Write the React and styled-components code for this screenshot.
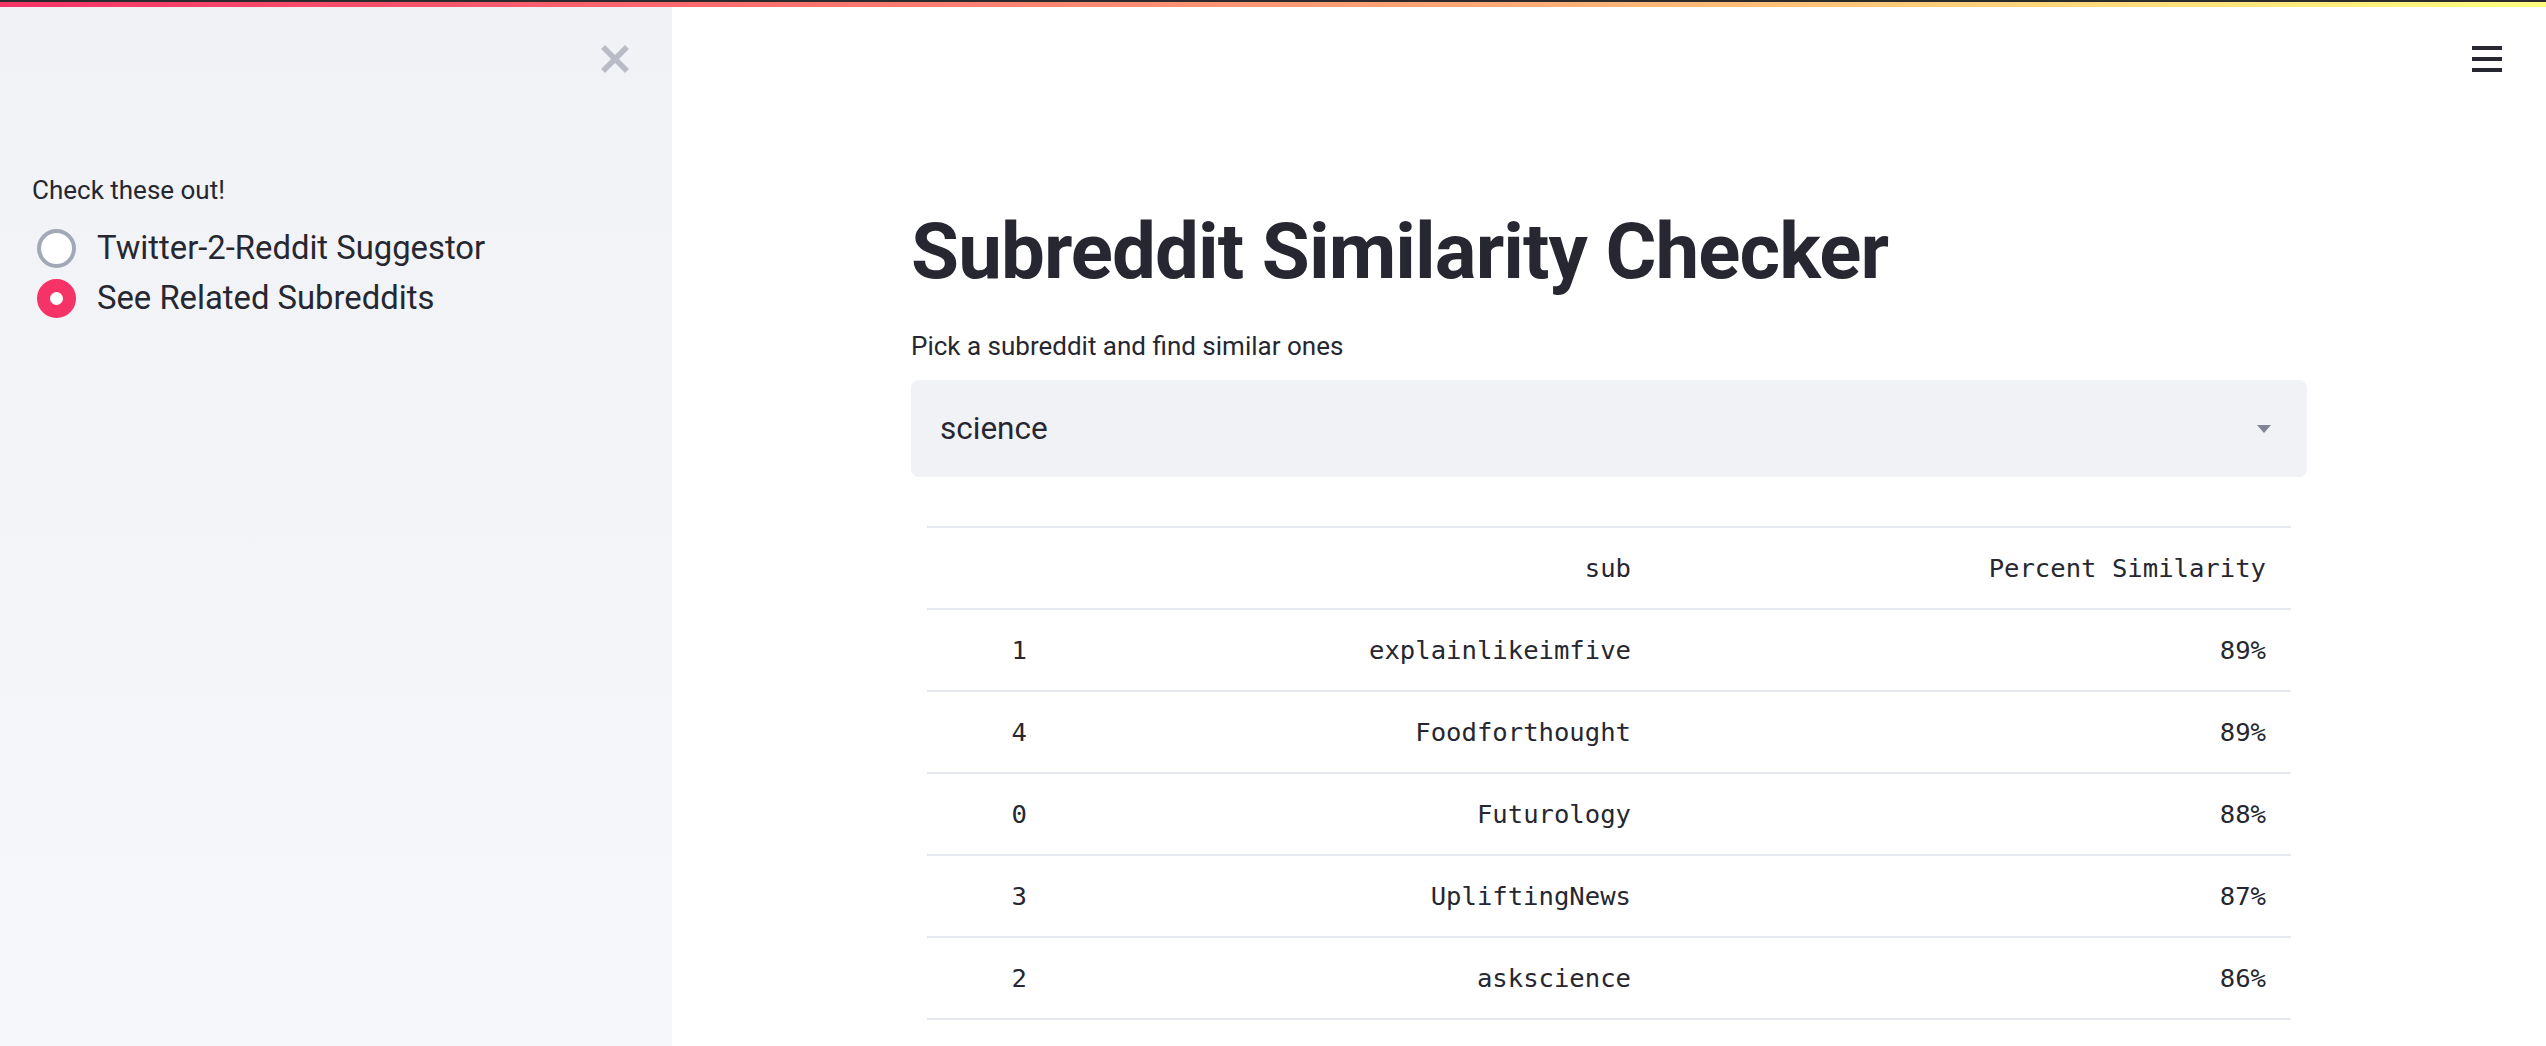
import styled, { createGlobalStyle } from "styled-components";

const GlobalStyle = createGlobalStyle`
  * { box-sizing: border-box; }
  html, body { margin: 0; padding: 0; background: #ffffff; }
  body {
    font-family: Roboto, "Noto Sans", sans-serif;
    color: #262730;
    -webkit-font-smoothing: antialiased;
  }
`;

const rows = [
  { idx: 1, sub: "explainlikeimfive", pct: "89%" },
  { idx: 4, sub: "Foodforthought", pct: "89%" },
  { idx: 0, sub: "Futurology", pct: "88%" },
  { idx: 3, sub: "UpliftingNews", pct: "87%" },
  { idx: 2, sub: "askscience", pct: "86%" },
];

const options = [
  { label: "Twitter-2-Reddit Suggestor", checked: false },
  { label: "See Related Subreddits", checked: true },
];

const App = () => (
  <>
    <GlobalStyle />
    <Page>
      <Decoration />
      <Body>
        <Sidebar>
          <SidebarTop>
            <CloseButton aria-label="Close sidebar">
              <svg width="28" height="28" viewBox="0 0 28 28">
                <path
                  d="M4 4 L24 24 M24 4 L4 24"
                  stroke="currentColor"
                  strokeWidth="5.5"
                  strokeLinecap="square"
                />
              </svg>
            </CloseButton>
          </SidebarTop>
          <WidgetLabel>Check these out!</WidgetLabel>
          <RadioGroup>
            {options.map((o) => (
              <RadioOption key={o.label}>
                <RadioMark $checked={o.checked} />
                <RadioText>{o.label}</RadioText>
              </RadioOption>
            ))}
          </RadioGroup>
        </Sidebar>
        <Main>
          <Toolbar>
            <MenuButton aria-label="Menu">
              <svg width="30" height="26" viewBox="0 0 30 26">
                <rect x="0" y="0" width="30" height="4" fill="currentColor" />
                <rect x="0" y="11" width="30" height="4" fill="currentColor" />
                <rect x="0" y="22" width="30" height="4" fill="currentColor" />
              </svg>
            </MenuButton>
          </Toolbar>
          <Block>
            <Title>Subreddit Similarity Checker</Title>
            <FieldLabel>Pick a subreddit and find similar ones</FieldLabel>
            <Select>
              <SelectValue>science</SelectValue>
              <Caret />
            </Select>
            <Table>
              <HeadRow>
                <Cell />
                <Cell>sub</Cell>
                <Cell>Percent Similarity</Cell>
              </HeadRow>
              {rows.map((r) => (
                <DataRow key={r.idx}>
                  <Cell>{r.idx}</Cell>
                  <Cell>{r.sub}</Cell>
                  <Cell>{r.pct}</Cell>
                </DataRow>
              ))}
            </Table>
          </Block>
        </Main>
      </Body>
    </Page>
  </>
);

export default App;

const Page = styled.div`
  display: flex;
  flex-direction: column;
  height: 1046px;
  overflow: hidden;
`;

const Decoration = styled.div`
  flex: none;
  height: 7px;
  border-top: 2px solid #2b2b2e;
  background: linear-gradient(90deg, #f63366, #fffd80);
`;

const Body = styled.div`
  flex: 1;
  display: flex;
  min-height: 0;
`;

const Sidebar = styled.aside`
  flex: none;
  width: 672px;
  padding: 38px 43px 0 32px;
  background: linear-gradient(180deg, #f0f2f6 0%, #f6f7fa 100%);
  display: flex;
  flex-direction: column;
`;

const SidebarTop = styled.div`
  display: flex;
  justify-content: flex-end;
  height: 126px;
`;

const CloseButton = styled.button`
  border: none;
  background: none;
  padding: 0;
  width: 28px;
  height: 28px;
  color: #b9bcc4;
  cursor: pointer;
  svg { display: block; }
`;

const WidgetLabel = styled.div`
  font-size: 26px;
  line-height: 38px;
  margin-bottom: 20px;
`;

const RadioGroup = styled.div`
  display: flex;
  flex-direction: column;
  gap: 11px;
`;

const RadioOption = styled.label`
  display: flex;
  align-items: center;
  gap: 21px;
  height: 39px;
  padding-left: 5px;
  cursor: pointer;
`;

const RadioMark = styled.span`
  flex: none;
  width: 39px;
  height: 39px;
  border-radius: 50%;
  background: #ffffff;
  border: ${(p) => (p.$checked ? "13px solid #f63366" : "4px solid #a3a8b8")};
`;

const RadioText = styled.span`
  font-size: 32.8px;
  line-height: 39px;
  white-space: nowrap;
`;

const Main = styled.main`
  flex: 1;
  display: flex;
  flex-direction: column;
  min-width: 0;
`;

const Toolbar = styled.div`
  display: flex;
  justify-content: flex-end;
  height: 100px;
  padding: 39px 44px 0 0;
`;

const MenuButton = styled.button`
  border: none;
  background: none;
  padding: 0;
  color: #262730;
  height: 26px;
  cursor: pointer;
  svg { display: block; }
`;

const Block = styled.div`
  width: 1460px;
  margin: 0 auto;
  padding: 92px 32px 0;
`;

const Title = styled.h1`
  margin: 0 0 20px;
  font-size: 78px;
  line-height: 106px;
  font-weight: 700;
  letter-spacing: -0.9px;
  white-space: nowrap;
`;

const FieldLabel = styled.div`
  font-size: 26px;
  line-height: 42px;
  margin-bottom: 13px;
`;

const Select = styled.div`
  height: 97px;
  border-radius: 8px;
  background: #f0f2f6;
  display: flex;
  align-items: center;
  justify-content: space-between;
  padding: 0 36px 0 29px;
  cursor: pointer;
`;

const SelectValue = styled.span`
  font-size: 31.5px;
`;

const Caret = styled.span`
  width: 0;
  height: 0;
  border-left: 7px solid transparent;
  border-right: 7px solid transparent;
  border-top: 8px solid #808495;
`;

const Table = styled.div`
  margin: 49px 16px 0;
  border-top: 2px solid #e6e9ef;
  font-family: "DejaVu Sans Mono", "Liberation Mono", monospace;
  font-size: 25.6px;
`;

const HeadRow = styled.div`
  display: grid;
  grid-template-columns: 125px 604px 1fr;
  height: 82px;
  border-bottom: 2px solid #e6e9ef;
`;

const DataRow = styled(HeadRow)``;

const Cell = styled.div`
  display: flex;
  align-items: center;
  justify-content: flex-end;
  padding-right: 25px;
  white-space: nowrap;
`;
